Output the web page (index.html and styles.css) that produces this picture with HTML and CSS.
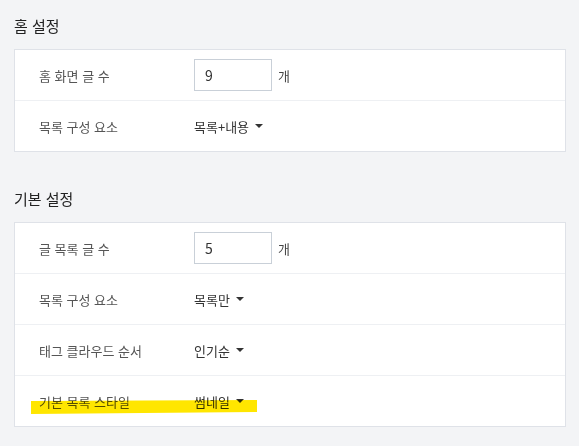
FILE: index.html
```html
<!DOCTYPE html>
<html lang="ko">
<head>
<meta charset="utf-8">
<link rel="stylesheet" href="styles.css">
</head>
<body>
<section class="group">
  <h2 class="group-title">홈 설정</h2>
  <div class="card">
    <div class="row">
      <span class="label">홈 화면 글 수</span>
      <span class="value"><span class="num-input">9</span><span class="unit">개</span></span>
    </div>
    <div class="row">
      <span class="label">목록 구성 요소</span>
      <span class="value select">목록+내용<i class="caret"></i></span>
    </div>
  </div>
</section>
<section class="group">
  <h2 class="group-title">기본 설정</h2>
  <div class="card">
    <div class="row">
      <span class="label">글 목록 글 수</span>
      <span class="value"><span class="num-input">5</span><span class="unit">개</span></span>
    </div>
    <div class="row">
      <span class="label">목록 구성 요소</span>
      <span class="value select">목록만<i class="caret"></i></span>
    </div>
    <div class="row">
      <span class="label">태그 클라우드 순서</span>
      <span class="value select">인기순<i class="caret"></i></span>
    </div>
    <div class="row marked">
      <span class="label">기본 목록 스타일</span>
      <span class="value select">썸네일<i class="caret"></i></span>
      <svg class="marker" width="226" height="15" viewBox="0 0 226 15"><polygon points="0,1 226,0 226,12 0,14" fill="#ffe600"/></svg>
    </div>
  </div>
</section>
</body>
</html>
```
FILE: styles.css
```css
html, body {
  margin: 0;
  background: #f3f4f6;
}
body {
  padding: 0 13px 0 14px;
  font-family: "Noto Sans CJK KR", "Noto Sans", sans-serif;
  color: #333;
}
.group + .group {
  margin-top: 36px;
}
.group-title {
  margin: 0 0 12px;
  padding-top: 15px;
  font-size: 15px;
  line-height: 22px;
  font-weight: 400;
  color: #222;
}
.group + .group .group-title {
  padding-top: 0;
}
.card {
  background: #fff;
  border: 1px solid #dfe2e8;
}
.row {
  position: relative;
  display: flex;
  align-items: center;
  height: 50px;
  padding-left: 24px;
  font-size: 13px;
}
.row + .row {
  border-top: 1px solid #eef0f3;
}
.label {
  width: 155px;
  color: #555;
}
.value {
  display: flex;
  align-items: center;
  color: #333;
}
.num-input {
  box-sizing: border-box;
  width: 78px;
  height: 32px;
  padding-left: 10px;
  border: 1px solid #c9d0d8;
  line-height: 30px;
  font-size: 14px;
  color: #333;
}
.unit {
  margin-left: 6px;
  color: #444;
}
.caret {
  margin-left: 6px;
  width: 0;
  height: 0;
  border-left: 4px solid transparent;
  border-right: 4px solid transparent;
  border-top: 4px solid #333;
}
.marker {
  position: absolute;
  left: 16px;
  top: 24px;
  mix-blend-mode: multiply;
}
```
